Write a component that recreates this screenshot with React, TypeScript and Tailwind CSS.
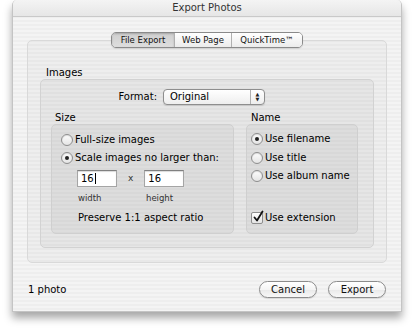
import React from "react";

const font = { fontFamily: '"DejaVu Sans", "Liberation Sans", sans-serif' };

function Radio({ checked }: { checked?: boolean }) {
  return (
    <span className="flex h-[12px] w-[12px] shrink-0 items-center justify-center rounded-full border border-[#8e8e8e] bg-[linear-gradient(180deg,#fdfdfd,#e4e4e4)] shadow-[inset_0_1px_1px_rgba(0,0,0,0.12)]">
      {checked && <span className="h-[4px] w-[4px] rounded-full bg-[#222]" />}
    </span>
  );
}

function Check() {
  return (
    <span className="relative flex h-[12px] w-[12px] shrink-0 items-center justify-center rounded-[2px] border border-[#8e8e8e] bg-[linear-gradient(180deg,#fdfdfd,#e4e4e4)]">
      <svg width="12" height="13" viewBox="0 0 12 13" className="absolute -top-[3px] left-0">
        <path d="M2.5 7.5 L5 10.5 L10.5 1.5" fill="none" stroke="#111" strokeWidth="1.8" strokeLinecap="round" strokeLinejoin="round" />
      </svg>
    </span>
  );
}

function Field({ value, caret }: { value: string; caret?: boolean }) {
  return (
    <div className="flex h-[17px] w-[40px] items-center border border-[#a5a5a5] border-t-[#808080] bg-white pl-[3px] text-[10px] leading-none text-black shadow-[inset_0_1px_1px_rgba(0,0,0,0.15)]">
      {value}
      {caret && <span className="ml-[1px] h-[11px] w-[1px] bg-black" />}
    </div>
  );
}

function Button({ label }: { label: string }) {
  return (
    <div className="flex h-[17px] w-[58px] items-center justify-center rounded-full border border-[#8c8c8c] bg-[linear-gradient(180deg,#ffffff_0%,#f4f4f4_50%,#e9e9e9_51%,#f8f8f8_100%)] text-[10px] leading-none text-[#111] shadow-[0_1px_1px_rgba(0,0,0,0.12)]">
      {label}
    </div>
  );
}

export default function App() {
  return (
    <div className="h-[332px] w-[414px] bg-white pl-[12px]" style={font}>
      <div className="flex h-[312px] w-[390px] flex-col overflow-hidden rounded-t-[5px] border-x border-b border-[#c4c4c4] bg-[repeating-linear-gradient(180deg,#eeeeee_0px,#eeeeee_2px,#f4f4f4_2px,#f4f4f4_4px)] shadow-[0_6px_8px_rgba(0,0,0,0.35)]">
        {/* title bar */}
        <div className="flex h-[17px] shrink-0 items-center justify-center border-b border-[#c9c9c9] bg-[linear-gradient(180deg,#f4f4f4,#e6e6e6)] text-[10px] leading-none text-[#333]">
          Export Photos
        </div>
        {/* tab panel */}
        <div className="mx-[14px] mt-[23px] flex h-[223px] flex-col rounded-[5px] border border-[#d9d9d9] bg-[rgba(0,0,0,0.025)]">
          <div className="-mt-[9px] flex justify-center">
            <div className="flex h-[16px] overflow-hidden rounded-[5px] border border-[#8a8a8a] text-[8.5px] leading-none text-[#111] shadow-[0_1px_1px_rgba(0,0,0,0.1)]">
              <div className="flex w-[62px] items-center justify-center bg-[linear-gradient(180deg,#cfcfcf,#dedede)] shadow-[inset_0_1px_2px_rgba(0,0,0,0.2)]">File Export</div>
              <div className="flex w-[57px] items-center justify-center border-l border-[#b0b0b0] bg-[linear-gradient(180deg,#ffffff,#ececec)]">Web Page</div>
              <div className="flex w-[71px] items-center justify-center border-l border-[#b0b0b0] bg-[linear-gradient(180deg,#ffffff,#ececec)]">QuickTime™</div>
            </div>
          </div>
          <div className="ml-[18px] mt-[20px] text-[10px] leading-none text-black">Images</div>
          <div className="mx-[12px] mt-[1px] flex h-[169px] flex-col rounded-[5px] border border-[#d2d2d2] bg-[rgba(0,0,0,0.03)] px-[10px]">
            <div className="mt-[9px] flex items-center">
              <div className="w-[112px] pr-[6px] text-right text-[10px] leading-none text-black">Format:</div>
              <div className="flex h-[16px] w-[102px] items-center rounded-[4px] border border-[#8e8e8e] bg-[linear-gradient(180deg,#ffffff,#eeeeee)] text-[10px] leading-none text-black shadow-[0_1px_1px_rgba(0,0,0,0.12)]">
                <span className="flex-1 pl-[6px]">Original</span>
                <span className="flex h-full w-[14px] flex-col items-center justify-center border-l border-[#b0b0b0] text-[5px] leading-[5px] text-[#222]">
                  <span>▲</span>
                  <span>▼</span>
                </span>
              </div>
            </div>
            <div className="mt-[8px] flex gap-[12px]">
              <div className="flex w-[183px] flex-col">
                <div className="ml-[4px] text-[10px] leading-none text-black">Size</div>
                <div className="mt-[1px] flex h-[110px] flex-col rounded-[5px] border border-[#cfcfcf] bg-[rgba(0,0,0,0.035)] pl-[9px] text-[10px] leading-none text-black">
                  <div className="mt-[9px] flex items-center gap-[2px]"><Radio /><span>Full-size images</span></div>
                  <div className="mt-[6px] flex items-center gap-[2px]"><Radio checked /><span>Scale images no larger than:</span></div>
                  <div className="ml-[16px] mt-[6px] flex items-center">
                    <Field value="16" caret />
                    <span className="mx-[11px] text-[9px] text-[#333]">x</span>
                    <Field value="16" />
                  </div>
                  <div className="ml-[17px] mt-[7px] flex text-[8.5px] leading-none text-[#333]">
                    <span className="w-[68px]">width</span>
                    <span>height</span>
                  </div>
                  <div className="ml-[17px] mt-[10px]">Preserve 1:1 aspect ratio</div>
                </div>
              </div>
              <div className="flex w-[112px] flex-col">
                <div className="ml-[5px] text-[10px] leading-none text-black">Name</div>
                <div className="mt-[1px] flex h-[110px] flex-col rounded-[5px] border border-[#cfcfcf] bg-[rgba(0,0,0,0.035)] pl-[4px] text-[10px] leading-none text-black">
                  <div className="mt-[8px] flex items-center gap-[2px]"><Radio checked /><span>Use filename</span></div>
                  <div className="mt-[7px] flex items-center gap-[2px]"><Radio /><span>Use title</span></div>
                  <div className="mt-[6px] flex items-center gap-[2px]"><Radio /><span>Use album name</span></div>
                  <div className="mt-[30px] flex items-center gap-[2px]"><Check /><span>Use extension</span></div>
                </div>
              </div>
            </div>
          </div>
        </div>
        {/* footer */}
        <div className="mt-[18px] flex items-center pl-[15px] pr-[15px]">
          <span className="flex-1 text-[10px] leading-none text-black">1 photo</span>
          <div className="flex gap-[11px]">
            <Button label="Cancel" />
            <Button label="Export" />
          </div>
        </div>
      </div>
    </div>
  );
}
